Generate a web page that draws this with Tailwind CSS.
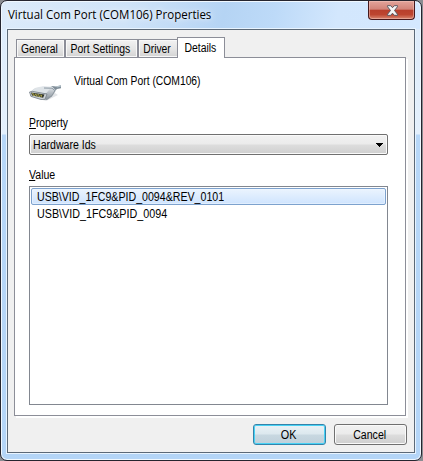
<!DOCTYPE html>
<html lang="en">
<head>
<meta charset="utf-8">
<title>Virtual Com Port (COM106) Properties</title>
<script src="https://cdn.jsdelivr.net/npm/@tailwindcss/browser@4"></script>
</head>
<body class="h-[461px] w-[423px] overflow-hidden bg-[#8b8d92] font-['Liberation_Sans',Arial,sans-serif] text-[12px] leading-[14px] text-black">
<main class="flex h-[461px] w-[422px] flex-col rounded-[7px] border border-[#25252f] bg-[linear-gradient(180deg,#dcebfb_0,#e4f0fc_133px,#b7d7f8_134px,#b4d5f7_100%)] px-[6px] pb-[7px] shadow-[inset_0_0_0_1px_#f0f8ff]">
  <header class="-mx-[5px] mt-px flex h-[27px] shrink-0 items-start justify-between rounded-t-[6px] bg-[linear-gradient(100deg,#dcebfa_0%,#cfe3f8_30%,#b5d4f4_53%,#bddaf8_65%,#d3e7fd_80%,#d4e8ff_100%)] pl-[6px] pr-[5px]">
    <h1 class="mt-[6px] origin-left scale-x-[.96] whitespace-nowrap font-['Open_Sans',sans-serif] text-[12px] leading-[14px] [text-shadow:0_0_8px_#ffffff,0_0_4px_#ffffff80]">Virtual Com Port (COM106) Properties</h1>
    <button aria-label="Close" class="-mt-px flex h-[19px] w-[47px] items-center justify-center rounded-b-[4px] border border-t-0 border-[#45181c] bg-[linear-gradient(180deg,#e3a49b_0,#d28378_46%,#b83f2c_50%,#bd4530_75%,#d9866f_100%)] shadow-[inset_0_0_0_1px_#f3c7bf80]">
      <svg class="ml-[2px]" width="13" height="11" viewBox="0 0 13 11"><path d="M1.5.7h3.2l1.8 2 1.8-2h3.2v1L8.5 5.5l3 3.8v1H8.3L6.5 8.2l-1.8 2.1H1.5v-1l3-3.8-3-3.8z" fill="#f5f5f5" stroke="#59575f" stroke-width="1"/></svg>
    </button>
  </header>
  <section class="flex min-h-0 flex-1 flex-col border border-[#5c6977] bg-[#f0f0f0] pl-[6px] pt-[7px] shadow-[0_0_0_1px_#e8f4ff]">
    <nav class="z-10 flex h-[21px] shrink-0 items-end pl-[2px]">
      <div class="flex h-[19px] w-[49px] items-center justify-center border border-[#8c8e98] bg-linear-to-b from-[#f2f2f2] via-[#e6e6e6] to-[#d3d3d3] shadow-[inset_0_0_0_1px_#f8f8f8]"><span class="-ml-[2px] scale-x-[.86] whitespace-nowrap">General</span></div>
      <div class="flex h-[19px] w-[73px] items-center justify-center border border-[#8c8e98] bg-linear-to-b from-[#f2f2f2] via-[#e6e6e6] to-[#d3d3d3] shadow-[inset_0_0_0_1px_#f8f8f8]"><span class="-ml-[2px] scale-x-[.87] whitespace-nowrap">Port Settings</span></div>
      <div class="flex h-[19px] w-[40px] items-center justify-center border border-r-0 border-[#8c8e98] bg-linear-to-b from-[#f2f2f2] via-[#e6e6e6] to-[#d3d3d3] shadow-[inset_0_0_0_1px_#f8f8f8]"><span class="-ml-[4px] scale-x-[.86] whitespace-nowrap">Driver</span></div>
      <div class="-ml-px flex h-[21px] w-[48px] items-center justify-center border border-b-0 border-[#8c8e98] bg-white"><span class="-ml-px -mt-px scale-x-[.87] whitespace-nowrap">Details</span></div>
    </nav>
    <div class="-mt-px flex h-[359px] w-[392px] flex-col border border-[#8c8e98] bg-white pl-[14px] pt-[16px] shadow-[2px_2px_0_0_#fff]">
      <div class="flex h-[42px]">
        <svg class="mt-[10px] shrink-0" width="34" height="18" viewBox="0 0 34 18">
          <defs><linearGradient id="body" x1="0" y1="0" x2="0" y2="1"><stop stop-color="#eef1f4"/><stop offset=".5" stop-color="#b4bbc2"/><stop offset="1" stop-color="#858e97"/></linearGradient></defs>
          <path d="M7 14l10 3 12-6-3-2z" fill="#e3e5e8"/>
          <path d="M20 4l3-2 4 .5 5-1.2v3l-4 .6-3 3.2z" fill="#7f8d98"/><path d="M27 2.4l5-1.2v1.4l-4 1z" fill="#b9c7ce"/>
          <path d="M1 8l5-4 8-2 9 .5 4 4-4 6-5 3.5-5-1L1 12z" fill="url(#body)"/>
          <path d="M2 7.5L7 4l8-1.6 7 1.2-5 5.8z" fill="#dfe4e8"/><path d="M15 4l8 .2 3 2.5" fill="none" stroke="#8b98a3"/>
          <path d="M.5 8l3-.6L18 10l-2 5.3-4 .2L2 12.4z" fill="#cdd2d6" stroke="#747e87" stroke-width=".8"/>
          <path d="M2 8.4l13.5 2.2-1.4 3.2L3 11.5z" fill="#33362c"/>
          <path d="M3 9.7l11 1.9M4 11.1l9 1.7" stroke="#cfc550" stroke-width=".9" stroke-dasharray="1.8 1"/>
          <path d="M17 15.5l6-4 3-5" fill="none" stroke="#8e989f" stroke-width="1"/>
        </svg>
        <span class="ml-[11px] origin-left scale-x-[.86] whitespace-nowrap">Virtual Com Port (COM106)</span>
      </div>
      <div class="flex h-[18px] justify-start"><span class="origin-left scale-x-[.86]"><span class="underline underline-offset-1">P</span>roperty</span></div>
      <div class="flex h-[21px] w-[359px] items-center justify-between rounded-[2px] border border-[#707070] bg-[linear-gradient(180deg,#f2f2f2_0,#ebebeb_48%,#dddddd_52%,#cfcfcf_100%)] pl-[3px] pr-[4px] shadow-[inset_0_0_0_1px_#fafafa]">
        <span class="origin-left scale-x-[.88] whitespace-nowrap">Hardware Ids</span>
        <svg width="7" height="4" viewBox="0 0 7 4" shape-rendering="crispEdges"><path d="M0 0h7v1H6v1H5v1H4v1H3V3H2V2H1V1H0z"/></svg>
      </div>
      <div class="mt-[13px] flex h-[18px] justify-start"><span class="origin-left scale-x-[.88]"><span class="underline underline-offset-1">V</span>alue</span></div>
      <div class="h-[219px] w-[359px] border border-[#828790] p-px">
        <div class="flex h-[17px] items-center rounded-[2px] border border-[#7da2ce] bg-linear-to-b from-[#ebf4fe] to-[#cfe4fe] pl-[5px] shadow-[inset_0_0_0_1px_#f1f7fe80]"><span class="origin-left scale-x-[.885] whitespace-nowrap">USB\VID_1FC9&amp;PID_0094&amp;REV_0101</span></div>
        <div class="flex h-[17px] items-center pl-[6px]"><span class="origin-left scale-x-[.895] whitespace-nowrap">USB\VID_1FC9&amp;PID_0094</span></div>
      </div>
    </div>
    <footer class="mt-[8px] flex justify-end gap-[8px] pr-[7px]">
      <button class="flex h-[21px] w-[73px] items-center justify-center rounded-[3px] border border-[#3483aa] bg-[linear-gradient(180deg,#eaf2f6_0,#dce8ee_48%,#c8d8e1_52%,#bfd0da_100%)] shadow-[inset_0_0_0_1px_#48d2f5]"><span class="-ml-px scale-x-[.9]">OK</span></button>
      <button class="flex h-[21px] w-[73px] items-center justify-center rounded-[3px] border border-[#707070] bg-[linear-gradient(180deg,#f2f2f2_0,#ebebeb_48%,#dddddd_52%,#cfcfcf_100%)] shadow-[inset_0_0_0_1px_#fafafa]"><span class="-ml-px scale-x-[.88]">Cancel</span></button>
    </footer>
  </section>
</main>
</body>
</html>
